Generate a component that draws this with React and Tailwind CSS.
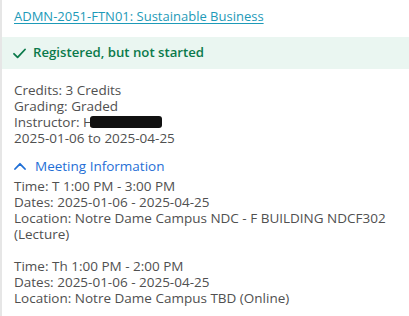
import React from 'react';

const Check = () => (
    <svg width="13" height="11" viewBox="0 0 13 11" fill="none" className="shrink-0 -ml-[1px]">
        <path d="M1 5.8 L4.6 9.3 L12 1.5" stroke="#0b7a4b" strokeWidth="1.8" strokeLinecap="round" strokeLinejoin="round" />
    </svg>
);

const ChevronUp = () => (
    <svg width="12" height="8" viewBox="0 0 12 8" fill="none" className="shrink-0">
        <path d="M1 7 L6 1.8 L11 7" stroke="#1f6fd6" strokeWidth="1.8" strokeLinecap="round" strokeLinejoin="round" />
    </svg>
);

const Meeting = ({ time, dates, location }) => (
    <div className="leading-4">
        <div>Time: {time}</div>
        <div>Dates: {dates}</div>
        <div>Location: {location}</div>
    </div>
);

export default function App() {
    return (
        <div className="w-[409px] h-[316px] bg-white border-l-2 border-[#e6e6e6] overflow-hidden text-[13.5px] text-[#505050]" style={{ fontFamily: '"Open Sans", "Noto Sans", sans-serif' }}>
            <div className="pl-3 pt-[7px] h-[35px] text-[13px]">
                <a href="#" className="text-[#1d9ab8] underline underline-offset-2">ADMN-2051-FTN01: Sustainable Business</a>
            </div>
            <div className="h-[32px] bg-[#eaf6f1] flex items-center gap-[7px] pl-3 mt-[2px]">
                <Check />
                <span className="font-semibold text-[13.2px] text-[#0b7a4b]">Registered, but not started</span>
            </div>
            <div className="pl-3 pt-[13px] leading-4">
                <div>Credits: 3 Credits</div>
                <div>Grading: Graded</div>
                <div className="flex items-center">
                    <span>Instructor: H</span>
                    <span className="inline-block w-[72px] h-[12px] bg-[#111] rounded-[3px] -ml-[3px]"></span>
                </div>
                <div>2025-01-06 to 2025-04-25</div>
            </div>
            <div className="pl-3 mt-[12px] flex items-center gap-[9px] text-[#1f6fd6] leading-4">
                <ChevronUp />
                <span>Meeting Information</span>
            </div>
            <div className="pl-3 mt-[4px] flex flex-col gap-4">
                <Meeting time="T 1:00 PM - 3:00 PM" dates="2025-01-06 - 2025-04-25" location="Notre Dame Campus NDC - F BUILDING NDCF302 (Lecture)" />
                <Meeting time="Th 1:00 PM - 2:00 PM" dates="2025-01-06 - 2025-04-25" location="Notre Dame Campus TBD (Online)" />
            </div>
        </div>
    );
}
